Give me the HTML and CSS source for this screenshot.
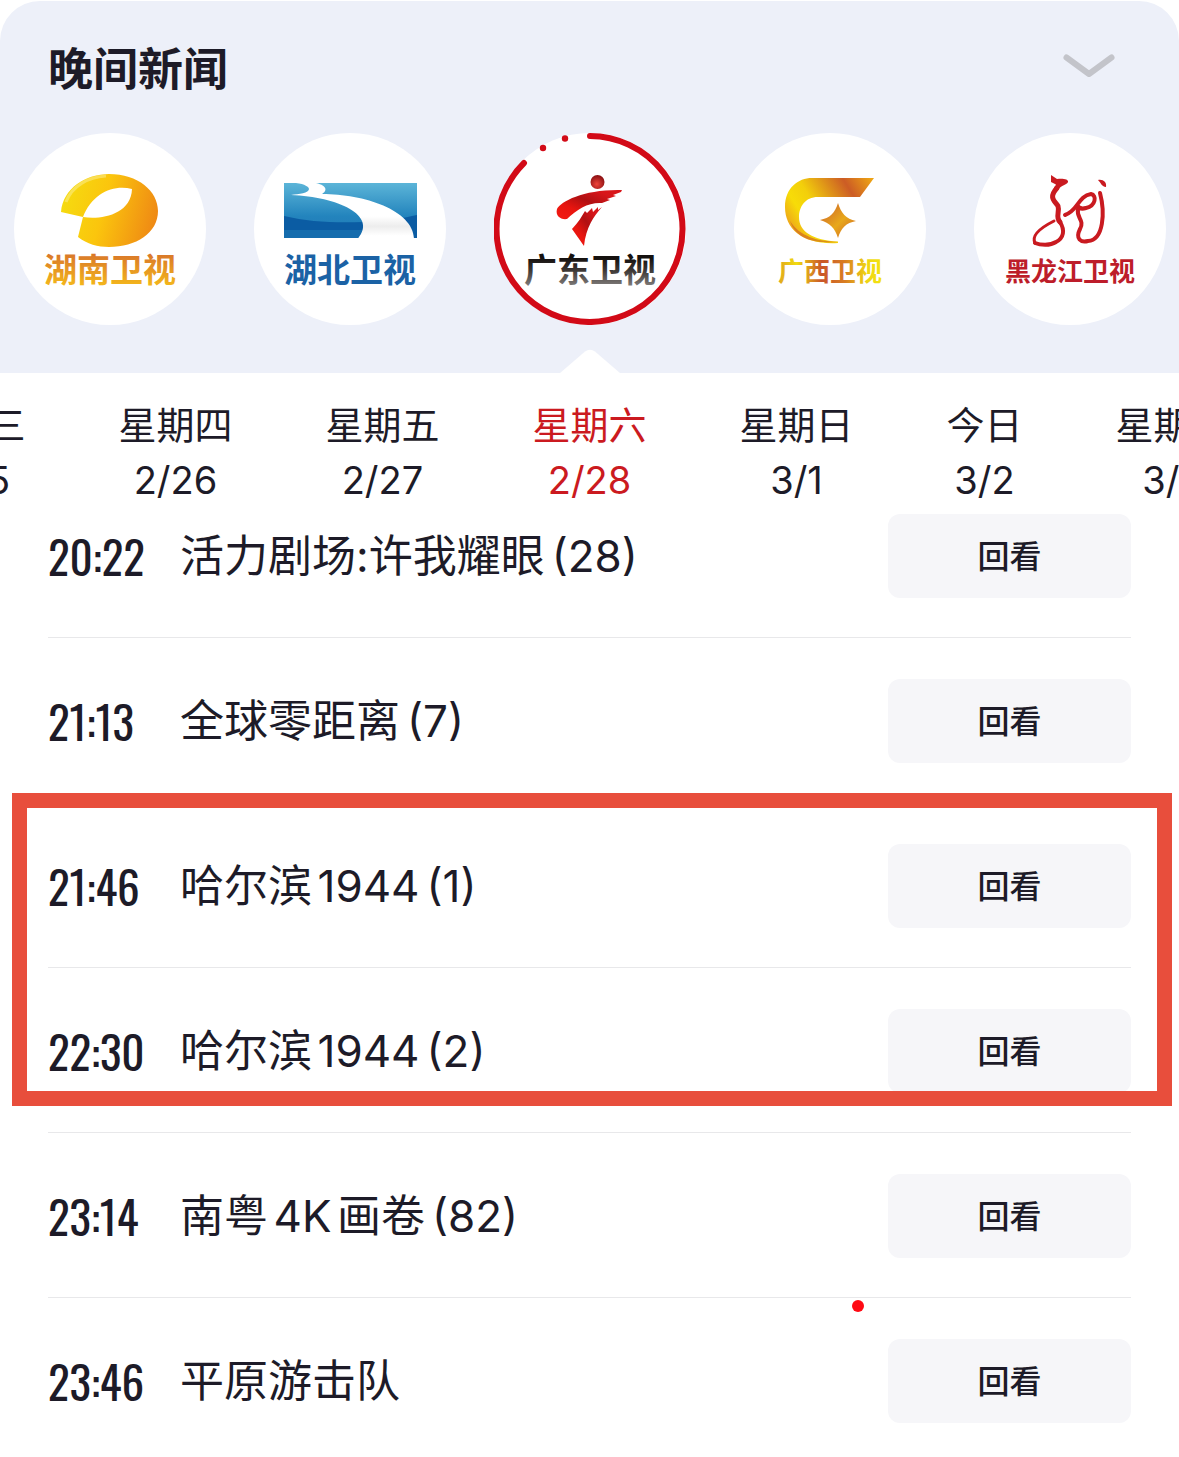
FILE: index.html
```html
<!DOCTYPE html>
<html lang="zh-CN">
<head>
  <meta charset="utf-8">
  <meta name="viewport" content="width=device-width, initial-scale=1.0">
  <title>节目单</title>
  <link rel="stylesheet" href="styles.css">
</head>
<body>
  <header class="header">
    <div class="title-bar">
      <h1>晚间新闻</h1>
      <button class="collapse-btn" aria-label="收起">
        <svg width="52" height="24" viewBox="0 0 52 24" fill="none" stroke="currentColor" stroke-width="6" stroke-linecap="round" stroke-linejoin="round">
          <path d="M3.500 3.500L26 20L48.500 3.500"></path>
        </svg>
      </button>
    </div>

    <div class="channels">
      <button class="channel">
        <svg viewBox="0 0 192 192">
          <defs>
            <linearGradient id="hunan-mark" x1="0" y1="0.300" x2="1" y2="0.500">
              <stop offset="0" stop-color="#f5dc10"></stop>
              <stop offset="0.450" stop-color="#fbc50d"></stop>
              <stop offset="1" stop-color="#ef8a14"></stop>
            </linearGradient>
            <linearGradient id="hunan-text" x1="0" y1="0" x2="0" y2="1">
              <stop offset="0.200" stop-color="#d9772a"></stop>
              <stop offset="0.850" stop-color="#f3b51c"></stop>
            </linearGradient>
          </defs>
          <path fill="url(#hunan-mark)" d="M47 79C49 55 72 41 95 41C124 41 144 58 144 78C144 100 122 114 95 114C84 114 73 111 64 104L69 84C86 87 117 82 118 56C100 51 78 60 69 84Z"></path>
          <path fill="none" stroke="#fbef9a" stroke-width="3" opacity="0.500" d="M52 69C58 53 74 44 92 43"></path>
          <text class="logo-text" x="96" y="149" fill="url(#hunan-text)">湖南卫视</text>
        </svg>
      </button>
      <button class="channel">
        <svg viewBox="0 0 192 192">
          <defs>
            <linearGradient id="hubei-mark" x1="0" y1="0" x2="0" y2="1">
              <stop offset="0" stop-color="#5cb5d8"></stop>
              <stop offset="0.600" stop-color="#2384bd"></stop>
              <stop offset="1" stop-color="#2179b5"></stop>
            </linearGradient>
            <linearGradient id="hubei-river" x1="0" y1="0" x2="0" y2="1">
              <stop offset="0.600" stop-color="#ffffff"></stop>
              <stop offset="0.780" stop-color="#ededed"></stop>
              <stop offset="0.950" stop-color="#ffffff"></stop>
            </linearGradient>
          </defs>
          <path fill="url(#hubei-mark)" d="M30 50H163V105H30Z"></path>
          <path fill="#0b5ca3" d="M30 83C55 89 80 90 110 89C135 88 150 85 163 82V105H30Z"></path>
          <path fill="#1c76b4" opacity="0.600" d="M30 97H110V105H30Z"></path>
          <path fill="url(#hubei-river)" d="M42 50C51 51 55 54 55 56C55 60 45 61 37 62C84 64 124 82 104 105.500H160C159 77 110 61 68 61C73 58 74 53 62 50Z"></path>
          <text class="logo-text" x="96" y="149" fill="#1b62a5">湖北卫视</text>
        </svg>
      </button>
      <button class="channel active">
        <svg viewBox="0 0 192 192">
          <defs>
            <linearGradient id="gd-mark" x1="0" y1="1" x2="1" y2="0">
              <stop offset="0" stop-color="#f31a12"></stop>
              <stop offset="0.300" stop-color="#e8150f"></stop>
              <stop offset="0.550" stop-color="#b01012"></stop>
              <stop offset="0.800" stop-color="#d8161a"></stop>
            </linearGradient>
            <radialGradient id="gd-ball" cx="0.450" cy="0.650" r="0.600">
              <stop offset="0" stop-color="#f0453a"></stop>
              <stop offset="1" stop-color="#8e1214"></stop>
            </radialGradient>
            <linearGradient id="gd-text" x1="0" y1="0" x2="0" y2="1">
              <stop offset="0.300" stop-color="#15110f"></stop>
              <stop offset="0.550" stop-color="#3d3836"></stop>
              <stop offset="0.900" stop-color="#85817f"></stop>
            </linearGradient>
          </defs>
          <path fill="none" stroke="#d20a17" stroke-width="6" stroke-linecap="round" d="M96 3A93 93 0 1 1 30 30"></path>
          <circle cx="49" cy="15" r="3.200" fill="#d20a17"></circle>
          <circle cx="71" cy="5.500" r="3.200" fill="#d20a17"></circle>
          <circle cx="103.500" cy="49" r="7" fill="url(#gd-ball)"></circle>
          <path fill="url(#gd-mark)" d="M63 76C67 68 91 56 128 57L127 59L119 62L122 63L113 66L116 67L108 70C95 69 83 76 73 86C67 87 61 83 63 76Z"></path>
          <path fill="url(#gd-mark)" d="M78 96C84 90 88 83 91 78L93 80L98 75L99 79L104 74L104 77L108 74C100 83 92 94 90 113Z"></path>
          <text class="logo-text" x="96" y="149" fill="url(#gd-text)">广东卫视</text>
        </svg>
      </button>
      <button class="channel">
        <svg viewBox="0 0 192 192">
          <defs>
            <linearGradient id="gx-mark" gradientUnits="userSpaceOnUse" x1="50" y1="85" x2="130" y2="35">
              <stop offset="0" stop-color="#eda51a"></stop>
              <stop offset="0.180" stop-color="#f7dc08"></stop>
              <stop offset="0.350" stop-color="#f3cf0b"></stop>
              <stop offset="0.750" stop-color="#cc5c25"></stop>
              <stop offset="1" stop-color="#eda214"></stop>
            </linearGradient>
            <linearGradient id="gx-star" x1="0" y1="0" x2="1" y2="1">
              <stop offset="0.200" stop-color="#d57826"></stop>
              <stop offset="0.550" stop-color="#e8a81b"></stop>
              <stop offset="0.800" stop-color="#d98022"></stop>
            </linearGradient>
            <linearGradient id="gx-text" x1="0" y1="0" x2="1" y2="0">
              <stop offset="0" stop-color="#e0a51c"></stop>
              <stop offset="0.180" stop-color="#f1dc10"></stop>
              <stop offset="0.420" stop-color="#c9552a"></stop>
              <stop offset="0.650" stop-color="#d97f22"></stop>
              <stop offset="0.850" stop-color="#efd513"></stop>
              <stop offset="1" stop-color="#f3e410"></stop>
            </linearGradient>
          </defs>
          <path fill="url(#gx-mark)" d="M140 45L126 64H84C71 64 65 74 65 84C65 99 79 107 104 108.500V110C70 112 51 97 51 74C51 55 64 45 78 45Z"></path>
          <path fill="#cc5c25" opacity="0.600" d="M56 88C66 104 84 108 104 109C80 111 62 106 56 88Z"></path>
          <path fill="url(#gx-star)" d="M104 70C107 80 112 86 122 88C112 90 107 95 104 105C101 95 96 90 86 87C96 85 101 80 104 70Z"></path>
          <text class="logo-text small" x="96" y="148" fill="url(#gx-text)">广西卫视</text>
        </svg>
      </button>
      <button class="channel">
        <svg viewBox="0 0 192 192">
          <g fill="none" stroke="#c91a20" stroke-width="4" stroke-linecap="round" stroke-linejoin="round">
            <path d="M83 55C74 65 81 68 84 73C86 79 81 84 86 89" stroke-width="5"></path>
            <path d="M86 89C91 97 90 105 82 109C76 113 66 112 61 110"></path>
            <path d="M61 110C58 104 62 97 80 88" stroke-width="3"></path>
            <path d="M91 82C104 78 104 63 117 61C123 62 122 73 112 75C106 77 104 74 103 72" stroke-width="4"></path>
            <path d="M104 76C102 85 111 87 106 96C101 106 107 110 114 108C130 107 131 79 126 60"></path>
          </g>
          <path fill="#c91a20" d="M77 42L83 46C88 45 95 46 94 49C93 52 87 52 84 57L80 57C79 53 84 52 81 51L77 49Z"></path>
          <path fill="#c91a20" d="M124 47C129 46 133 49 132 54C128 54 127 50 124 47Z"></path>
          <text class="logo-text small" x="96" y="148" fill="#bd1d2a">黑龙江卫视</text>
        </svg>
      </button>
    </div>

    <svg class="pointer" width="60" height="24" viewBox="0 0 60 24">
      <path fill="#ffffff" d="M0 24L25 2.500Q30 -1 35 2.500L60 24Z"></path>
    </svg>
  </header>

  <nav class="dates">
    <div class="dates-before">
      <button class="date">星期三<br>2/25</button>
      <button class="date">星期四<br>2/26</button>
      <button class="date">星期五<br>2/27</button>
    </div>
    <button class="date active">星期六<br>2/28</button>
    <div class="dates-after">
      <button class="date">星期日<br>3/1</button>
      <button class="date">今日<br>3/2</button>
      <button class="date">星期二<br>3/3</button>
    </div>
  </nav>

  <main class="schedule">
    <ul class="programs">
      <li class="program">
        <time>20:22</time>
        <span class="name tight">活力剧场:许我耀眼<span class="episode">(28)</span></span>
        <button class="replay-btn">回看</button>
      </li>
      <li class="program">
        <time>21:13</time>
        <span class="name">全球零距离<span class="episode">(7)</span></span>
        <button class="replay-btn">回看</button>
      </li>
      <li class="program">
        <time>21:46</time>
        <span class="name">哈尔滨1944<span class="episode">(1)</span></span>
        <button class="replay-btn">回看</button>
      </li>
      <li class="program">
        <time>22:30</time>
        <span class="name">哈尔滨1944<span class="episode">(2)</span></span>
        <button class="replay-btn">回看</button>
      </li>
      <li class="program">
        <time>23:14</time>
        <span class="name">南粤4K画卷<span class="episode">(82)</span></span>
        <button class="replay-btn">回看</button>
      </li>
      <li class="program">
        <time>23:46</time>
        <span class="name">平原游击队</span>
        <button class="replay-btn">回看</button>
      </li>
    </ul>
    <div class="highlight"></div>
    <div class="red-dot"></div>
  </main>
</body>
</html>
```
FILE: styles.css
```css
:root {
  --foreground: #1d1b28;
  --background: #ffffff;
  --panel: #edf0f9;
  --primary: #cb1a20;
  --border: #e8e8ea;
  --button: #f6f6f9;
  --muted: #c3c4ca;
  --mark: #e84e3c;
}

* {
  margin: 0;
  padding: 0;
  box-sizing: border-box;
}

body {
  font-family: Inter, "Noto Sans CJK SC", sans-serif;
  background-color: var(--background);
  color: var(--foreground);
  overflow-x: hidden;
}

button {
  background: none;
  border: none;
  color: inherit;
  font-family: inherit;
  cursor: pointer;
}

.header {
  position: relative;
  margin-top: 1px;
  padding: 37px 0 48px;
  background-color: var(--panel);
  border-radius: 40px 40px 0 0;
}

.title-bar {
  display: flex;
  justify-content: space-between;
  align-items: flex-start;
  padding: 0 64px 0 48px;
  margin-bottom: 31px;
}

h1 {
  font-size: 45px;
  font-weight: 700;
  line-height: 64px;
}

.collapse-btn {
  display: flex;
  padding-top: 16px;
  color: var(--muted);
}

.channels {
  display: flex;
  justify-content: center;
  gap: 48px;
}

.channel {
  flex: none;
  width: 192px;
  height: 192px;
  border-radius: 50%;
  background-color: var(--background);
}

.channel svg {
  display: block;
}

.logo-text {
  font-family: "Noto Sans CJK SC", sans-serif;
  font-size: 33px;
  font-weight: 700;
  text-anchor: middle;
}

.logo-text.small {
  font-size: 26px;
}

.pointer {
  position: absolute;
  bottom: 0;
  left: 50%;
  transform: translateX(-50%);
}

.dates {
  display: grid;
  grid-template-columns: minmax(0, 1fr) auto minmax(0, 1fr);
  gap: 93px;
  padding: 25px 0 6px;
  overflow: hidden;
}

.dates-before,
.dates-after {
  display: flex;
  gap: 93px;
}

.dates-before {
  justify-content: flex-end;
}

.date {
  flex: none;
  font-size: 38px;
  line-height: 55px;
  white-space: nowrap;
}

.date.active {
  color: var(--primary);
}

.schedule {
  position: relative;
  padding: 0 48px 34px;
}

.programs {
  list-style: none;
}

.program {
  display: flex;
  align-items: center;
  padding: 41px 0 39px;
  border-bottom: 1px solid var(--border);
}

.program:first-child {
  padding-top: 0;
}

.program:last-child {
  padding-bottom: 0;
  border-bottom: none;
}

time {
  width: 132px;
  font-family: Oswald, "Roboto Condensed", Roboto, sans-serif;
  font-size: 45px;
  font-weight: 400;
  font-variant-numeric: tabular-nums;
  line-height: 60px;
}

.name {
  flex: 1;
  font-size: 44px;
  line-height: 60px;
  text-autospace: normal;
}

.name.tight {
  text-autospace: no-autospace;
}

.episode {
  margin-left: 7px;
}

.replay-btn {
  width: 243px;
  height: 84px;
  padding-bottom: 4px;
  border-radius: 12px;
  background-color: var(--button);
  font-size: 32px;
  font-weight: 500;
}

/* frame around the two episodes */
.highlight {
  position: absolute;
  top: 279px;
  left: 12px;
  right: 7px;
  height: 313px;
  border: 15px solid var(--mark);
  pointer-events: none;
}

.red-dot {
  position: absolute;
  top: 786px;
  right: 315px;
  width: 12px;
  height: 12px;
  border-radius: 50%;
  background-color: #ff0a14;
}
```
